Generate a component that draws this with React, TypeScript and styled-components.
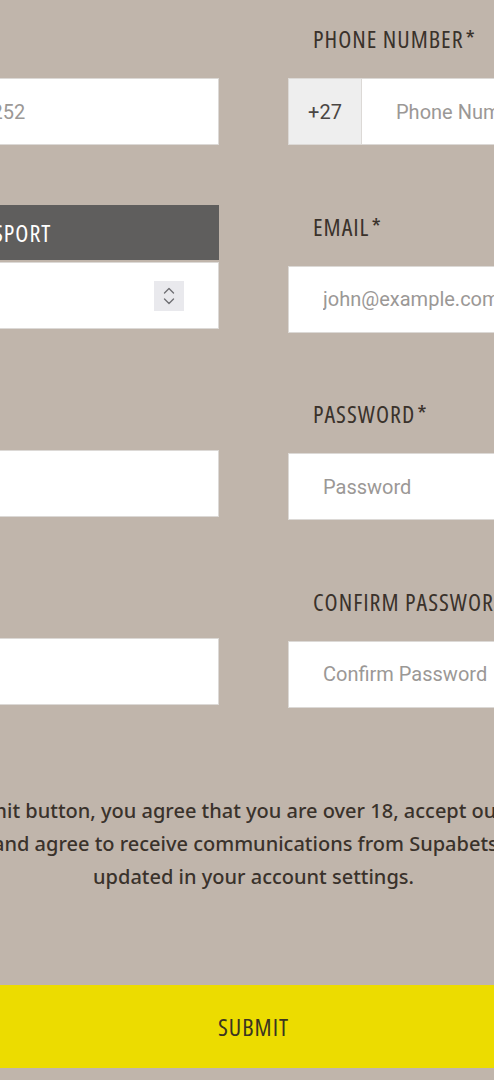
import * as React from 'react';
import styled, { createGlobalStyle, css } from 'styled-components';

const labelFont = `"Open Sans", "DejaVu Sans Condensed", sans-serif`;
const fieldFont = `Roboto, "Liberation Sans", sans-serif`;
const bodyFont = `"Noto Sans", "Open Sans", sans-serif`;

const Global = createGlobalStyle`
  html, body {
    margin: 0;
    background: #c0b5ab;
    overflow: hidden;
  }
  * {
    box-sizing: border-box;
  }
`;

const App = () => {
  return (
    <Page>
      <Global />
      <Form onSubmit={(e) => e.preventDefault()}>
        <Columns>
          <Column>
            <Field>
              <Label>ID NUMBER<Star>*</Star></Label>
              <Input placeholder="Your ID Number: e.g. 80010150252" />
            </Field>
            <Tabs>
              <Tab>ID NUMBER</Tab>
              <Tab active>PASSPORT</Tab>
            </Tabs>
            <SelectBox>
              <Stepper>
                <svg width="14" height="22" viewBox="0 0 14 22" fill="none" stroke="#707075" strokeWidth="1.4" strokeLinecap="round" strokeLinejoin="round">
                  <polyline points="2.5,8 7,3.5 11.5,8" />
                  <polyline points="2.5,14 7,18.5 11.5,14" />
                </svg>
              </Stepper>
            </SelectBox>
            <Field spaced>
              <Label>FIRST NAME<Star>*</Star></Label>
              <Input />
            </Field>
            <Field>
              <Label>LAST NAME<Star>*</Star></Label>
              <Input />
            </Field>
          </Column>

          <Column>
            <Field>
              <Label>PHONE NUMBER<Star>*</Star></Label>
              <PhoneRow>
                <Prefix>+27</Prefix>
                <Input placeholder="Phone Number" inGroup />
              </PhoneRow>
            </Field>
            <Field>
              <Label>EMAIL<Star>*</Star></Label>
              <Input placeholder="john@example.com" />
            </Field>
            <Field>
              <Label>PASSWORD<Star>*</Star></Label>
              <Input type="password" placeholder="Password" />
            </Field>
            <Field>
              <Label>CONFIRM PASSWORD<Star>*</Star></Label>
              <Input type="password" placeholder="Confirm Password" />
            </Field>
          </Column>
        </Columns>

        <Terms>
          By clicking the submit button, you agree that you are over 18, accept our Terms &amp; Conditions
          <br />
          and Privacy Policy and agree to receive communications from Supabets. Preferences can be
          <br />
          updated in your account settings.
        </Terms>

        <SubmitButton type="submit">SUBMIT</SubmitButton>
      </Form>
    </Page>
  );
};

//------------STYLED------------
const FlexRowCenter = css`
  display: flex;
  flex-direction: row;
  justify-content: center;
  align-items: center;
`;

const CondensedText = css`
  font-family: ${labelFont};
  font-stretch: 75%;
  font-weight: 500;
  font-size: 24px;
  letter-spacing: 1px;
`;

const Page = styled.div`
  width: 100%;
  min-height: 1080px;
  overflow: hidden;
`;

const Form = styled.form`
  width: 1149px;
  margin-left: calc(50% - 568px);
  padding-top: 26px;
`;

const Columns = styled.div`
  display: grid;
  grid-template-columns: 540px 540px;
  column-gap: 69px;
  align-items: start;
`;

const Column = styled.div`
  display: flex;
  flex-direction: column;
`;

const Field = styled.div<{ spaced?: boolean }>`
  display: flex;
  flex-direction: column;
  margin-top: ${(p) => (p.spaced ? '69px' : '0')};
  margin-bottom: 68.5px;

  &:last-child {
    margin-bottom: 0;
  }
`;

const Label = styled.label`
  ${CondensedText}
  line-height: 26px;
  height: 26px;
  color: #3a322b;
  padding-left: 25px;
  margin-bottom: 26px;
`;

const Star = styled.span`
  margin-left: 2px;
`;

const Input = styled.input<{ inGroup?: boolean }>`
  height: 67px;
  width: 100%;
  border: 1px solid #dcd9d6;
  border-left: ${(p) => (p.inGroup ? 'none' : '1px solid #dcd9d6')};
  background: #ffffff;
  padding: 0 34px;
  font-family: ${fieldFont};
  font-size: 20px;
  color: #333;
  outline: none;
  min-width: 0;

  &::placeholder {
    color: #9b9896;
  }
`;

const PhoneRow = styled.div`
  display: flex;
  flex-direction: row;
`;

const Prefix = styled.div`
  flex: 0 0 74px;
  height: 67px;
  background: #eeeeee;
  border: 1px solid #dcd9d6;
  font-family: ${fieldFont};
  font-size: 20px;
  color: #4a4643;
  ${FlexRowCenter}
`;

const Tabs = styled.div`
  display: grid;
  grid-template-columns: 1fr 1fr;
  height: 55px;
  margin-top: -8.5px;
`;

const Tab = styled.div<{ active?: boolean }>`
  ${CondensedText}
  font-weight: 400;
  background: ${(p) => (p.active ? '#5f5e5d' : '#e5e0db')};
  color: ${(p) => (p.active ? '#ffffff' : '#3a322b')};
  display: flex;
  align-items: center;
  padding-left: 10px;
`;

const SelectBox = styled.div`
  height: 67px;
  margin-top: 2px;
  background: #ffffff;
  border: 1px solid #dcd9d6;
  display: flex;
  align-items: center;
  justify-content: flex-end;
  padding-right: 34px;
`;

const Stepper = styled.div`
  width: 30px;
  height: 30px;
  background: #e9e9ed;
  ${FlexRowCenter}
`;

const Terms = styled.p`
  font-family: ${bodyFont};
  font-weight: 500;
  font-size: 20px;
  line-height: 33px;
  color: #3a322b;
  text-align: center;
  white-space: nowrap;
  margin: 86px 0 0;
`;

const SubmitButton = styled.button`
  ${CondensedText}
  display: block;
  width: 100%;
  height: 83px;
  margin-top: 92px;
  border: none;
  background: #ecdc00;
  color: #3b3520;
  cursor: pointer;
  ${FlexRowCenter}
`;

export default App;
